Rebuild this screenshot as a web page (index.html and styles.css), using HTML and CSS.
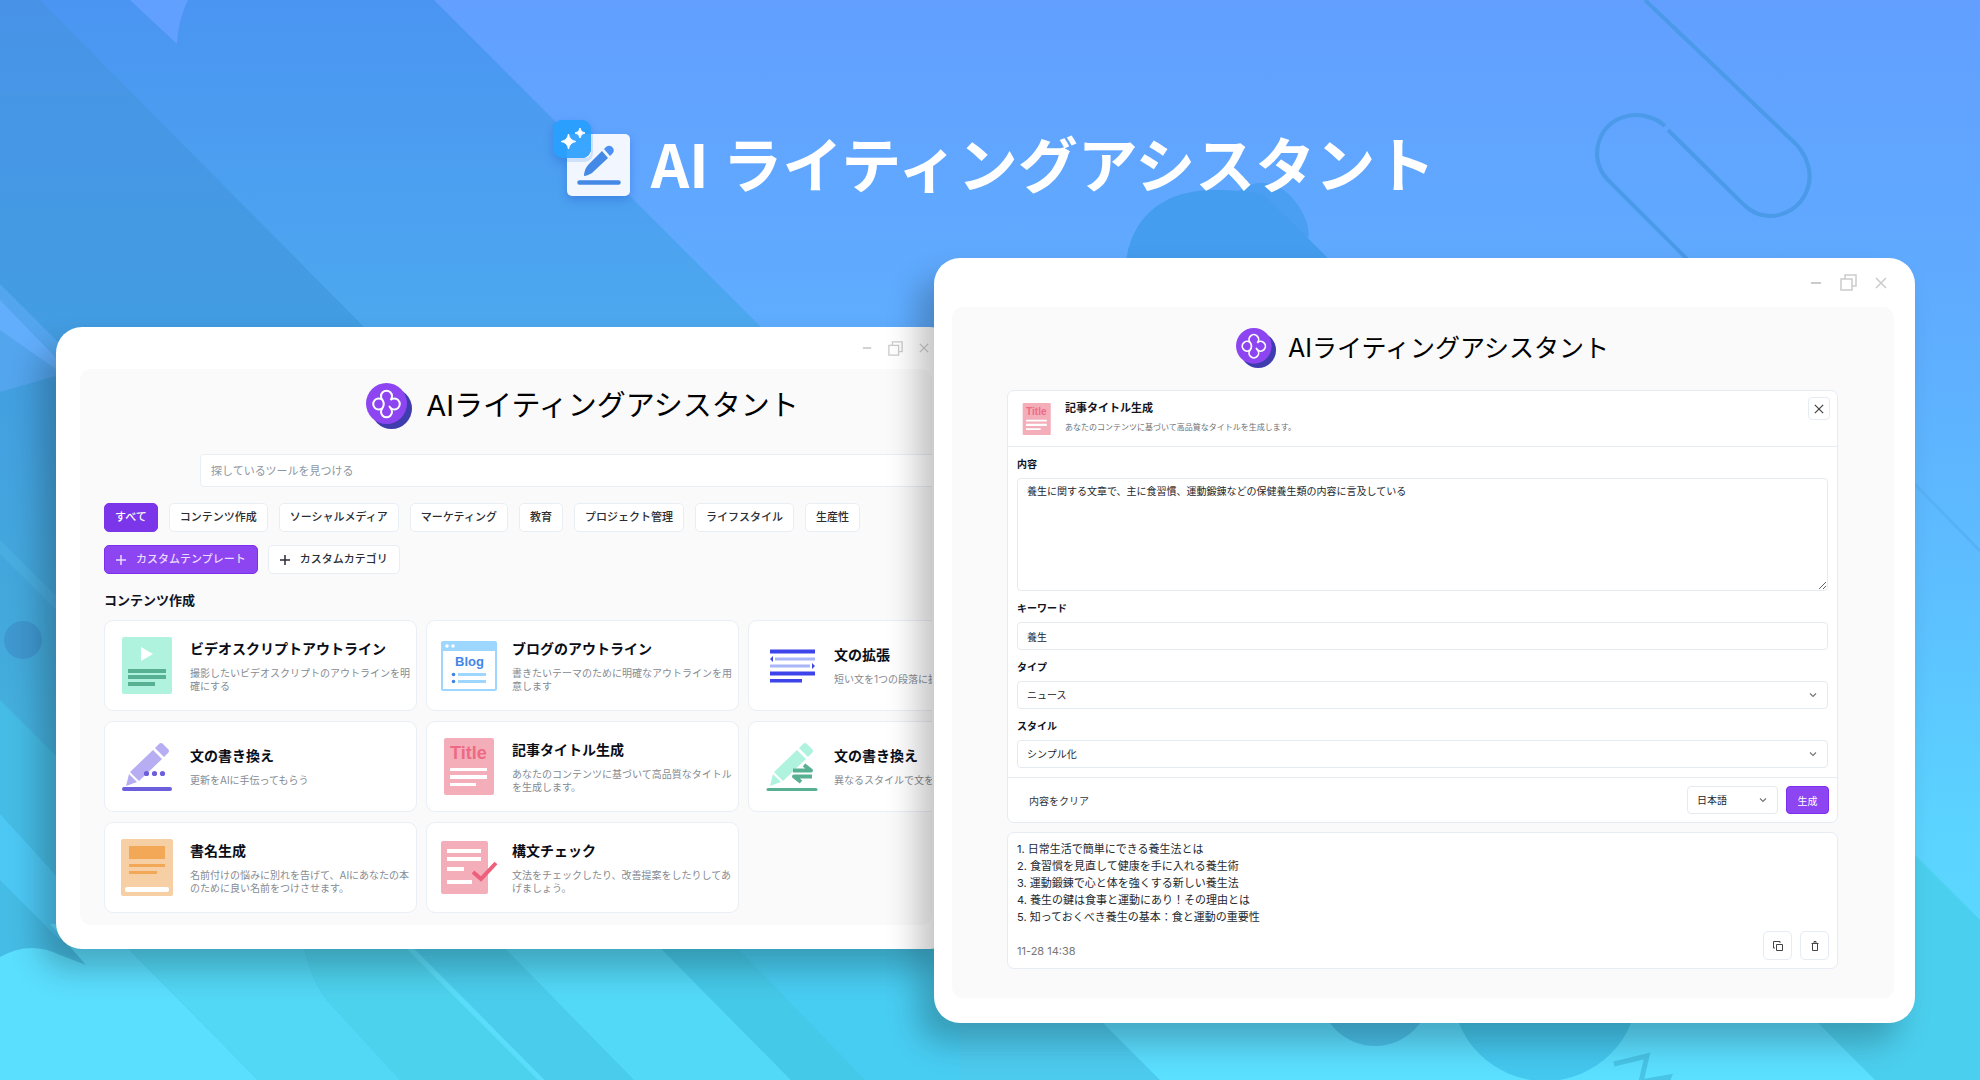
FILE: index.html
```html
<!DOCTYPE html>
<html lang="ja">
<head>
<meta charset="utf-8">
<title>AI ライティングアシスタント</title>
<link rel="stylesheet" href="styles.css">
</head>
<body>
<svg class="backdrop" viewBox="0 0 1980 1080" preserveAspectRatio="xMidYMid slice" aria-hidden="true">
  <defs>
    <linearGradient id="sky" x1="0" y1="0" x2="0" y2="1">
      <stop offset="0" stop-color="#629fff"/>
      <stop offset="0.3" stop-color="#5fadff"/>
      <stop offset="0.55" stop-color="#5dbfff"/>
      <stop offset="0.75" stop-color="#5bd2ff"/>
      <stop offset="1" stop-color="#5be0ff"/>
    </linearGradient>
    <linearGradient id="bandA" x1="0" y1="0" x2="0" y2="1">
      <stop offset="0" stop-color="#4893e8"/>
      <stop offset="0.3" stop-color="#439de2"/>
      <stop offset="0.6" stop-color="#43aadb"/>
      <stop offset="1" stop-color="#47c6ea"/>
    </linearGradient>
    <linearGradient id="bandB" x1="0" y1="0" x2="0" y2="1">
      <stop offset="0" stop-color="#4a95f2"/>
      <stop offset="1" stop-color="#4da9ef"/>
    </linearGradient>
  </defs>
  <rect width="1980" height="1080" fill="url(#sky)"/>
  <path d="M0 0H80L1080 1000V1080H0z" fill="url(#bandA)"/>
  <path d="M40 0H434L774 340H377z" fill="url(#bandB)"/>
  <path d="M130 0L177 44Q178 20 188 0z" fill="#62a0ff"/>
  <path d="M0 284L70 354V372L0 392z" fill="#53a5ee"/>
  <path d="M0 300L60 362V372L0 330z" fill="#62aefc"/>
  <circle cx="23" cy="640" r="19" fill="#3f98d0"/>
  <path d="M0 540L60 600V614L0 554z" fill="#4bb1e2" opacity="0.7"/>
  <path d="M0 700L60 760V1000H0z" fill="#45bce5"/>
  <path d="M0 814L60 880V940L0 880z" fill="#4dc8f5"/>
  <path d="M0 957Q30 940 60 955L86 965L50 924H104L258 1080H0z" fill="#5bdfff"/>
  <path d="M104 924H300Q308 985 336 1010L400 1080H258z" fill="#52d7f5"/>
  <path d="M300 924H382L541 1080H400L336 1010Q308 985 300 924z" fill="#4dd2ee"/>
  <path d="M382 924H390L545 1080H538z" fill="#5addfa"/>
  <path d="M390 924H481L634 1080H545z" fill="#4acdec"/>
  <path d="M481 924H637L791 1080H634z" fill="#53d9f8"/>
  <path d="M637 924H714L865 1080H791z" fill="#45c9e9"/>
  <path d="M714 924H960V1080H865z" fill="#48cdf2"/>
  <path d="M960 1000H1080L1160 1080H960z" fill="#4dcbef"/>
  <path d="M1126 262C1132 215 1165 190 1215 190Q1228 190 1237 192Q1264 172 1290 195Q1312 220 1308 240L1332 262z" fill="#4b9ff2"/>
  <path d="M1126 262C1132 215 1165 190 1215 190Q1245 190 1264 195L1332 262z" fill="#459def"/>
  <g fill="none" stroke="#4b99e9" stroke-width="4">
    <path d="M1645 0L1797 145C1825 178 1802 216 1770 216Q1755 216 1743 204L1668 130"/>
    <path d="M1665 126C1640 104 1597 116 1597 155Q1598 170 1608 180L1694 266"/>
    <path d="M1900 469L1980 551" stroke="#57b2f5" stroke-width="3"/>
  </g>
  <circle cx="1375" cy="990" r="56" fill="#49c1ea"/>
  <circle cx="1545" cy="988" r="93" fill="#44c8ef"/>
  <path d="M1980 920L1880 820V1000H1795L1875 1080H1980z" fill="#4bcfee"/>
  <path d="M1614 1064L1647 1056L1641 1082L1669 1077L1664 1090" fill="none" stroke="#48c4e6" stroke-width="5"/>
</svg>

<svg hidden>
  <symbol id="clover" viewBox="0 0 46 46">
    <circle cx="25.500" cy="25.500" r="20.500" fill="#3f3cae"/>
    <circle cx="20.500" cy="20.500" r="20.500" fill="#8d45f2"/>
    <g fill="none" stroke="#fff" stroke-width="2" stroke-linecap="round">
      <path d="M16.500 17A5.500 5.500 0 1 1 24.500 17A5.500 5.500 0 1 1 24.500 25A5.500 5.500 0 1 1 16.500 25A5.500 5.500 0 1 1 16.500 17Q19 21 16.500 25M24.500 25L23.500 23.500"/>
    </g>
  </symbol>
  <symbol id="icon-title" viewBox="0 0 57 57">
    <rect x="3" width="50" height="57" rx="2" fill="#f3aeba"/>
    <text x="9" y="21" font-family="Liberation Sans, sans-serif" font-weight="700" font-size="18" fill="#ee6a83">Title</text>
    <path d="M9 30h37v3h-37zM9 37h37v4h-37zM9 45h26v3h-26z" fill="#fff"/>
  </symbol>
  <symbol id="restore" viewBox="0 0 17 17">
    <path d="M1 5H12V16H1zM5 5V1H16V12H12" fill="none" stroke="currentColor" stroke-width="1.500"/>
  </symbol>
  <symbol id="cross" viewBox="0 0 12 12"><path d="M1 1L11 11M11 1L1 11" fill="none" stroke="currentColor" stroke-width="1.500"/></symbol>
  <symbol id="minus" viewBox="0 0 12 12"><path d="M1 6H11" fill="none" stroke="currentColor" stroke-width="2"/></symbol>
  <symbol id="plus" viewBox="0 0 10 10"><path d="M5 0V10M0 5H10" fill="none" stroke="currentColor" stroke-width="1.500"/></symbol>
  <symbol id="chevron" viewBox="0 0 8 8"><path d="M1 2.500L4 5.500L7 2.500" fill="none" stroke="currentColor" stroke-width="1.200"/></symbol>
</svg>

<header class="hero">
  <svg class="hero-logo" viewBox="0 0 77 77" aria-hidden="true">
    <rect x="14" y="14" width="63" height="62" rx="5" fill="#f1f6ff"/>
    <path d="M14 38H32Q38 38 38 32V14H40V32Q40 41 32 42H14z" fill="#cfe0fb"/>
    <rect width="38" height="38" rx="9" fill="#2b9ffd"/>
    <path d="M14 14H38V30Q36 38 29 38H14z" fill="#3ba6ff"/>
    <path d="M15.500 14Q16.500 20.500 23 21.500Q16.500 22.500 15.500 29Q14.500 22.500 8 21.500Q14.500 20.500 15.500 14z" fill="#fff" stroke="#fff"/>
    <path d="M27 8Q27.500 12.500 32 13Q27.500 13.500 27 18Q26.500 13.500 22 13Q26.500 12.500 27 8z" fill="#fff" stroke="#fff"/>
    <path d="M49 31L55 38L39 53Q34 56 31 56Q31 50 35 45z" fill="#4489e6"/>
    <path d="M51 29L53 27Q57 24 60 28Q62 31 59 34L57 36z" fill="#4a90f5"/>
    <path d="M26.500 62.500H65.500" stroke="#4489e6" stroke-width="4.500" stroke-linecap="round"/>
  </svg>
  <h1 class="hero-title">AI ライティングアシスタント</h1>
</header>

<main class="windows">
  <section class="window library-window">
    <div class="titlebar">
      <button class="ctl" aria-label="最小化"><svg class="i10"><use href="#minus"/></svg></button>
      <button class="ctl" aria-label="元に戻す"><svg class="i15"><use href="#restore"/></svg></button>
      <button class="ctl" aria-label="閉じる"><svg class="i10"><use href="#cross"/></svg></button>
    </div>
    <div class="panel library">
      <div class="library-inner">
        <div class="brand"><svg class="brand-logo" aria-hidden="true"><use href="#clover"/></svg><h2 class="brand-name">AIライティングアシスタント</h2></div>
        <input class="search" type="search" aria-label="ツール検索" placeholder="探しているツールを見つける">
        <nav class="chips categories">
          <button class="chip chip-active">すべて</button>
          <button class="chip">コンテンツ作成</button>
          <button class="chip">ソーシャルメディア</button>
          <button class="chip">マーケティング</button>
          <button class="chip">教育</button>
          <button class="chip">プロジェクト管理</button>
          <button class="chip">ライフスタイル</button>
          <button class="chip">生産性</button>
        </nav>
        <div class="chips">
          <button class="chip chip-add chip-primary"><svg class="i10"><use href="#plus"/></svg>カスタムテンプレート</button>
          <button class="chip chip-add"><svg class="i10"><use href="#plus"/></svg>カスタムカテゴリ</button>
        </div>
        <h3 class="section-title">コンテンツ作成</h3>
        <div class="cards">
          <a class="card" href="#">
            <svg class="card-icon" viewBox="0 0 57 57"><rect x="3" width="50" height="57" rx="2" fill="#aff3df"/><path d="M22 10L34 17L22 24z" fill="#fff"/><path d="M9 32h38v4h-38zM9 38h38v4h-38zM9 45h27v4h-27z" fill="#58b093"/></svg>
            <div class="card-text"><h4 class="card-title">ビデオスクリプトアウトライン</h4><p class="card-desc">撮影したいビデオスクリプトのアウトラインを明確にする</p></div>
          </a>
          <a class="card" href="#">
            <svg class="card-icon" viewBox="0 0 57 57"><rect y="4" width="56" height="50" rx="2" fill="#9dd6ff"/><path d="M2 14H54V52H2z" fill="#fff"/><circle cx="6" cy="9" r="1.800" fill="#fff"/><circle cx="12" cy="9" r="1.800" fill="#fff"/><text x="14" y="29" font-family="Liberation Sans, sans-serif" font-weight="700" font-size="13" fill="#4287e8">Blog</text><path d="M17 36h28v3h-28zM17 43h28v3h-28z" fill="#9dd6ff"/><circle cx="12.500" cy="37.500" r="1.800" fill="#3f84e6"/><circle cx="12.500" cy="44.500" r="1.800" fill="#3f84e6"/></svg>
            <div class="card-text"><h4 class="card-title">ブログのアウトライン</h4><p class="card-desc">書きたいテーマのために明確なアウトラインを用意します</p></div>
          </a>
          <a class="card" href="#">
            <svg class="card-icon" viewBox="0 0 57 57"><path d="M7 12.500h45v4h-45zM7 34.500h45v4h-45zM7 42h32v3.500h-32zM7 22L10 19V25zM52 29L49 26V32z" fill="#3d45ea"/><path d="M12 20.500h40v3h-40zM7 27.500h40v3h-40z" fill="#a9b6fa"/></svg>
            <div class="card-text"><h4 class="card-title">文の拡張</h4><p class="card-desc">短い文を1つの段落に拡張します</p></div>
          </a>
          <a class="card" href="#">
            <svg class="card-icon" viewBox="0 0 57 57"><path d="M40 6Q42 4 44 6L49 11Q51 13 49 15L45 19L36 10zM34 12L43 21L20 43L11 34zM10 36L18 44L7 48z" fill="#b7adf2"/><path d="M5 51H51" stroke="#6c5fdb" stroke-width="4" stroke-linecap="round"/><g fill="#6c5fdb"><circle cx="27.500" cy="35.500" r="2.600"/><circle cx="35.500" cy="35.500" r="2.600"/><circle cx="43.500" cy="35.500" r="2.600"/></g></svg>
            <div class="card-text"><h4 class="card-title">文の書き換え</h4><p class="card-desc">更新をAIに手伝ってもらう</p></div>
          </a>
          <a class="card" href="#">
            <svg class="card-icon"><use href="#icon-title"/></svg>
            <div class="card-text"><h4 class="card-title">記事タイトル生成</h4><p class="card-desc">あなたのコンテンツに基づいて高品質なタイトルを生成します。</p></div>
          </a>
          <a class="card" href="#">
            <svg class="card-icon" viewBox="0 0 57 57"><path d="M40 6Q42 4 44 6L49 11Q51 13 49 15L45 19L36 10zM34 12L43 21L20 43L11 34zM10 36L18 44L7 48z" fill="#aff3df"/><path d="M5 51.500H53" stroke="#58b093" stroke-width="3" stroke-linecap="round"/><path d="M30 32.500H48L41 27M49 38.500H31L38 44" fill="none" stroke="#58b093" stroke-width="4" stroke-linejoin="round"/></svg>
            <div class="card-text"><h4 class="card-title">文の書き換え</h4><p class="card-desc">異なるスタイルで文を書き換える</p></div>
          </a>
          <a class="card" href="#">
            <svg class="card-icon" viewBox="0 0 57 57"><rect x="2" width="52" height="57" rx="2" fill="#f6cfa4"/><path d="M10 7h36v13h-36zM10 25h36v3h-36zM10 32h28v3h-28z" fill="#f3a857"/><rect x="6" y="48" width="44" height="5" rx="2" fill="#fff"/></svg>
            <div class="card-text"><h4 class="card-title">書名生成</h4><p class="card-desc">名前付けの悩みに別れを告げて、AIにあなたの本のために良い名前をつけさせます。</p></div>
          </a>
          <a class="card" href="#">
            <svg class="card-icon" viewBox="0 0 57 57"><rect y="2" width="47" height="53" rx="2" fill="#f3aeba"/><path d="M6 10h34v4h-34zM6 18h34v4h-34zM6 28h17v4h-17zM6 41h25v4h-25z" fill="#fff"/><path d="M32 33L40 40L55 24" fill="none" stroke="#ee5f7c" stroke-width="4"/></svg>
            <div class="card-text"><h4 class="card-title">構文チェック</h4><p class="card-desc">文法をチェックしたり、改善提案をしたりしてあげましょう。</p></div>
          </a>
        </div>
      </div>
    </div>
  </section>

  <section class="window editor-window">
    <div class="titlebar titlebar-large">
      <button class="ctl" aria-label="最小化"><svg class="i12"><use href="#minus"/></svg></button>
      <button class="ctl" aria-label="元に戻す"><svg class="i17"><use href="#restore"/></svg></button>
      <button class="ctl" aria-label="閉じる"><svg class="i12"><use href="#cross"/></svg></button>
    </div>
    <div class="panel editor">
      <div class="brand brand-small"><svg class="brand-logo" aria-hidden="true"><use href="#clover"/></svg><h2 class="brand-name">AIライティングアシスタント</h2></div>
      <form class="box">
        <div class="form-head">
          <svg class="form-icon"><use href="#icon-title"/></svg>
          <div class="form-head-text"><h3 class="form-title">記事タイトル生成</h3><p class="form-desc">あなたのコンテンツに基づいて高品質なタイトルを生成します。</p></div>
          <button type="button" class="close" aria-label="閉じる"><svg class="i10"><use href="#cross"/></svg></button>
        </div>
        <div class="form-body">
          <div class="field"><label for="content">内容</label><textarea id="content" class="control area">養生に関する文章で、主に食習慣、運動鍛錬などの保健養生類の内容に言及している</textarea></div>
          <div class="field"><label for="keyword">キーワード</label><input id="keyword" class="control" type="text" value="養生"></div>
          <div class="field"><label for="type">タイプ</label><div class="select"><select id="type" class="control"><option>ニュース</option></select><svg class="chev"><use href="#chevron"/></svg></div></div>
          <div class="field"><label for="style">スタイル</label><div class="select"><select id="style" class="control"><option>シンプル化</option></select><svg class="chev"><use href="#chevron"/></svg></div></div>
        </div>
        <div class="form-foot">
          <button type="button" class="clear">内容をクリア</button>
          <div class="select lang"><select class="control" aria-label="言語"><option>日本語</option></select><svg class="chev"><use href="#chevron"/></svg></div>
          <button type="button" class="generate">生成</button>
        </div>
      </form>
      <article class="box result">
        <p class="result-text">1. 日常生活で簡単にできる養生法とは<br>2. 食習慣を見直して健康を手に入れる養生術<br>3. 運動鍛錬で心と体を強くする新しい養生法<br>4. 養生の鍵は食事と運動にあり！その理由とは<br>5. 知っておくべき養生の基本：食と運動の重要性</p>
        <div class="result-foot">
          <time class="stamp">11-28 14:38</time>
          <button class="tool" aria-label="コピー"><svg class="i10" viewBox="0 0 10 10"><path d="M3.500 3.500H9.500V9.500H3.500zM2 7H.5V.5H7V2" fill="none" stroke="currentColor"/></svg></button>
          <button class="tool" aria-label="削除"><svg class="i10" viewBox="0 0 10 10"><path d="M1.500 2.500H8.500M2.500 2.500V9.500H7.500V2.500M4 2V.500H6V2" fill="none" stroke="currentColor"/></svg></button>
        </div>
      </article>
    </div>
  </section>
</main>
</body>
</html>
```

FILE: styles.css
```css
* { box-sizing: border-box; }

body {
  margin: 0;
  min-height: 100vh;
  position: relative;
  overflow-x: hidden;
  background: #5fb4ff;
  color: #10131c;
  font-family: Inter, "Noto Sans CJK JP", sans-serif;
  font-size: 11px;
}

h1, h2, h3, h4, p { margin: 0; }
button, input, select, textarea { font: inherit; color: inherit; margin: 0; }
button { padding: 0; background: none; border: 0; }
svg { display: block; flex: none; }
svg[hidden] { display: none; }

.backdrop {
  position: absolute;
  inset: 0;
  width: 100%;
  height: 100%;
  z-index: -1;
}

.i10 { width: 10px; height: 10px; }
.i12 { width: 12px; height: 12px; }
.i15 { width: 15px; height: 15px; }
.i17 { width: 17px; height: 17px; }

/* Hero */
.hero {
  display: flex;
  justify-content: center;
  gap: 21px;
  height: 258px;
  padding: 120px 0 0 8px;
}
.hero-logo {
  width: 77px;
  height: 77px;
  filter: drop-shadow(0 4px 5px rgba(40, 90, 210, 0.4));
}
.hero-title {
  font-family: "Noto Sans CJK JP", sans-serif;
  font-size: 60px;
  font-weight: 700;
  line-height: 84px;
  color: #fff;
  white-space: nowrap;
}

/* Windows */
.windows {
  display: flex;
  align-items: flex-start;
  padding: 0 65px 55px 56px;
}
.window {
  min-width: 0;
  background: #fff;
  border-radius: 26px;
  box-shadow: -16px 20px 32px rgba(0, 0, 0, 0.24);
}
.library-window { flex: 900 1 0; margin-top: 69px; }
.editor-window { flex: 981 1 0; margin-left: -22px; position: relative; }

.titlebar {
  display: flex;
  align-items: center;
  justify-content: flex-end;
  gap: 16px;
  height: 42px;
  padding: 0 27px 0 0;
  color: #cbcbcb;
}
.titlebar-large { height: 49px; gap: 18px; padding-right: 28px; }

.panel {
  background: #fafafa;
  border-radius: 11px;
}
.library {
  margin: 0 24px 24px;
  padding: 14px 0 12px 24px;
  overflow: hidden;
}
.library-inner { margin-right: -129px; }
.editor {
  margin: 0 21px 25px 18px;
  padding: 21px 56px 29px 55px;
}

.brand {
  display: flex;
  align-items: center;
  justify-content: center;
  gap: 14px;
  height: 46px;
}
.brand-logo { width: 46px; height: 46px; }
.brand-name {
  font-size: 29px;
  font-weight: 400;
  line-height: 40px;
  white-space: nowrap;
  color: #000;
}
.brand-small { gap: 12px; height: 40px; margin-bottom: 22px; }
.brand-small .brand-logo { width: 40px; height: 40px; }
.brand-small .brand-name { font-size: 25px; line-height: 36px; }

/* Tool library */
.search {
  display: block;
  width: calc(100% - 192px);
  height: 33px;
  margin: 25px 96px 16px;
  padding: 0 10px;
  border: 1px solid #e9eef5;
  border-radius: 4px;
  background: #fff;
  appearance: none;
}
.search::placeholder { color: #8d96a3; opacity: 1; }

.chips { display: flex; gap: 10px; margin-bottom: 13px; }
.categories { gap: 11px; }
.chip {
  height: 29px;
  padding: 0 10px;
  border: 1px solid #e9eef5;
  border-radius: 5px;
  background: #fff;
  font-weight: 500;
  line-height: 27px;
  color: #2a2d33;
  white-space: nowrap;
}
.chip-active { background: #7c36ea; border-color: #7c36ea; color: #fff; }
.chip-add { display: flex; align-items: center; gap: 10px; padding: 0 11px; }
.chip-primary { background: #8d45f2; border-color: #7c2fec; color: #e9dcff; }

.section-title {
  margin: 17px 0 11px;
  font-size: 13px;
  font-weight: 700;
  line-height: 18px;
}

.cards {
  display: grid;
  grid-template-columns: repeat(3, 1fr);
  gap: 10px 9px;
}
.card {
  display: flex;
  align-items: center;
  gap: 14px;
  height: 91px;
  padding: 0 4px 0 14px;
  border: 1px solid #eaeef5;
  border-radius: 9px;
  background: #fff;
  color: inherit;
  text-decoration: none;
}
.card-icon { width: 57px; height: 57px; }
.card-text { min-width: 0; }
.card-title {
  margin-bottom: 8px;
  font-size: 14px;
  font-weight: 700;
  line-height: 20px;
  color: #0a0d16;
}
.card-desc {
  font-size: 10px;
  line-height: 13px;
  color: #858b93;
}

/* Editor */
.box {
  background: #fff;
  border: 1px solid #e6ebf4;
  border-radius: 7px;
}
.form-head {
  display: flex;
  align-items: flex-start;
  height: 56px;
  padding: 6px 7px 0 13px;
  border-bottom: 1px solid #e6ebf4;
}
.form-icon { width: 32px; height: 32px; margin-top: 6px; }
.form-head-text { flex: 1; padding: 3px 0 0 12px; }
.form-title {
  font-size: 11px;
  font-weight: 700;
  line-height: 16px;
  margin-bottom: 5px;
}
.form-desc { font-size: 8px; line-height: 12px; color: #6b7077; }
.close {
  display: flex;
  align-items: center;
  justify-content: center;
  width: 22px;
  height: 23px;
  border: 1px solid #e6ebf4;
  border-radius: 4px;
  color: #444;
}
.form-body { padding: 9px; font-size: 10px; }
.field + .field { margin-top: 9px; }
.field label {
  display: block;
  margin-bottom: 6px;
  font-weight: 700;
  line-height: 16px;
}
.control {
  display: block;
  width: 100%;
  height: 28px;
  padding: 0 9px;
  border: 1px solid #e4eaf2;
  border-radius: 4px;
  background: #fff;
  font-size: 10px;
  line-height: 16px;
  color: #22252c;
  appearance: none;
}
.area { height: 113px; padding: 4px 9px; resize: both; }
.select { position: relative; }
.chev {
  position: absolute;
  right: 11px;
  top: 10px;
  width: 8px;
  height: 8px;
  color: #777;
}
.form-foot {
  display: flex;
  align-items: center;
  gap: 8px;
  padding: 8px;
  border-top: 1px solid #e6ebf4;
  font-size: 10px;
}
.clear { margin-right: auto; padding-left: 13px; color: #333; }
.lang { width: 91px; }
.generate {
  width: 43px;
  height: 28px;
  border: 1px solid #7c2fec;
  border-radius: 4px;
  background: #8d45f2;
  color: #fff;
}

.result { margin-top: 9px; padding: 8px; }
.result-text { padding-left: 1px; line-height: 17px; color: #25282e; }
.result-foot {
  display: flex;
  align-items: flex-end;
  gap: 8px;
  margin-top: 5px;
}
.stamp { margin-right: auto; padding-left: 1px; line-height: 18px; color: #777; }
.tool {
  display: flex;
  align-items: center;
  justify-content: center;
  width: 29px;
  height: 29px;
  border: 1px solid #e6ebf4;
  border-radius: 5px;
  color: #444;
}
```
